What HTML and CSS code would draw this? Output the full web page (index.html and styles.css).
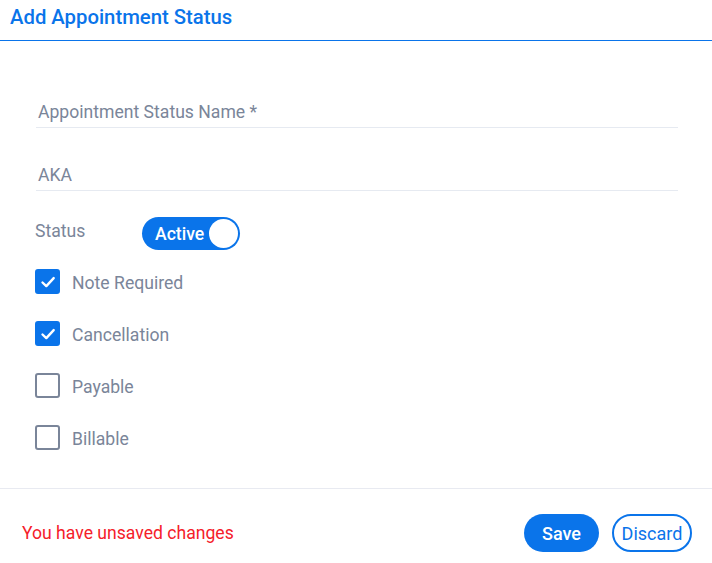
FILE: index.html
```html
<!DOCTYPE html>
<html>
<head>
<meta charset="utf-8">
<link rel="stylesheet" href="styles.css">
</head>
<body>
<div class="dialog">
  <header class="header">
    <h1 class="title">Add Appointment Status</h1>
  </header>
  <main class="body">
    <div class="field field-first"><span class="field-label">Appointment Status Name *</span></div>
    <div class="field field-second"><span class="field-label">AKA</span></div>
    <div class="status-row">
      <span class="status-label">Status</span>
      <div class="toggle"><span class="toggle-text">Active</span><span class="knob"></span></div>
    </div>
    <div class="checks">
      <label class="check-row"><span class="box checked"><svg viewBox="0 0 24 24" width="24" height="24"><path d="M6.5 12.5l3.8 3.6 7.4-8" fill="none" stroke="#fff" stroke-width="2.4" stroke-linecap="round" stroke-linejoin="round"/></svg></span><span class="check-text">Note Required</span></label>
      <label class="check-row"><span class="box checked"><svg viewBox="0 0 24 24" width="24" height="24"><path d="M6.5 12.5l3.8 3.6 7.4-8" fill="none" stroke="#fff" stroke-width="2.4" stroke-linecap="round" stroke-linejoin="round"/></svg></span><span class="check-text">Cancellation</span></label>
      <label class="check-row"><span class="box"></span><span class="check-text">Payable</span></label>
      <label class="check-row"><span class="box"></span><span class="check-text">Billable</span></label>
    </div>
  </main>
  <footer class="footer">
    <span class="unsaved">You have unsaved changes</span>
    <div class="actions">
      <button class="btn btn-save">Save</button>
      <button class="btn btn-discard">Discard</button>
    </div>
  </footer>
</div>
</body>
</html>
```
FILE: styles.css
```css
html, body {
  margin: 0;
  padding: 0;
  background: #ffffff;
}
body {
  font-family: Roboto, "Liberation Sans", Arial, sans-serif;
  color: #7a8599;
}
.dialog {
  width: 712px;
  height: 563px;
  display: flex;
  flex-direction: column;
}
.header {
  height: 41px;
  box-sizing: border-box;
  border-bottom: 1px solid #0a74ea;
  display: flex;
  align-items: flex-start;
}
.title {
  margin: 0;
  padding: 5px 0 0 10px;
  font-size: 20.3px;
  line-height: 24px;
  font-weight: 500;
  color: #0a74ea;
}
.body {
  flex: 1;
  padding: 0 34px 0 35px;
  display: flex;
  flex-direction: column;
}
.field {
  margin-left: 1px;
  border-bottom: 1px solid #e6eaf1;
  padding: 0 0 4px 2px;
}
.field-first {
  margin-top: 61px;
}
.field-second {
  margin-top: 37px;
}
.field-label {
  display: block;
  font-size: 17.6px;
  line-height: 21px;
  color: #7a8599;
}
.status-row {
  display: flex;
  align-items: center;
  margin-top: 26px;
  height: 33px;
}
.status-label {
  width: 107px;
  font-size: 17.6px;
  line-height: 21px;
  margin-top: -4px;
}
.toggle {
  width: 98px;
  height: 33px;
  box-sizing: border-box;
  border-radius: 17px;
  background: #0a74ea;
  display: flex;
  align-items: center;
  justify-content: space-between;
  padding: 0 2px 0 13px;
}
.toggle-text {
  color: #ffffff;
  font-size: 17.6px;
  font-weight: 500;
}
.knob {
  width: 29px;
  height: 29px;
  border-radius: 50%;
  background: #ffffff;
}
.checks {
  display: flex;
  flex-direction: column;
  margin-top: 19px;
  gap: 27px;
}
.check-row {
  display: flex;
  align-items: center;
  height: 25px;
}
.box {
  width: 25px;
  height: 25px;
  box-sizing: border-box;
  border: 2px solid #7a8599;
  border-radius: 3px;
  margin-right: 12px;
  display: flex;
  align-items: center;
  justify-content: center;
}
.box.checked {
  background: #0a74ea;
  border-color: #0a74ea;
}
.box svg {
  flex: none;
}
.check-text {
  font-size: 17.6px;
  line-height: 21px;
  color: #7a8599;
  margin-top: 4px;
}
.footer {
  height: 74px;
  border-top: 1px solid #e8eaf1;
  display: flex;
  align-items: center;
  justify-content: space-between;
  padding: 0 20px 0 22px;
}
.unsaved {
  color: #f5202a;
  font-size: 17.6px;
  margin-top: 14px;
}
.actions {
  display: flex;
  gap: 13px;
  margin-top: 14px;
}
.btn {
  height: 38px;
  border-radius: 19px;
  font-family: Roboto, "Liberation Sans", Arial, sans-serif;
  font-size: 18px;
  padding: 0;
  cursor: pointer;
}
.btn-save {
  width: 75px;
  background: #0a74ea;
  border: none;
  color: #ffffff;
  font-weight: 500;
}
.btn-discard {
  width: 80px;
  background: #ffffff;
  border: 2px solid #0a74ea;
  color: #0a74ea;
}
```
